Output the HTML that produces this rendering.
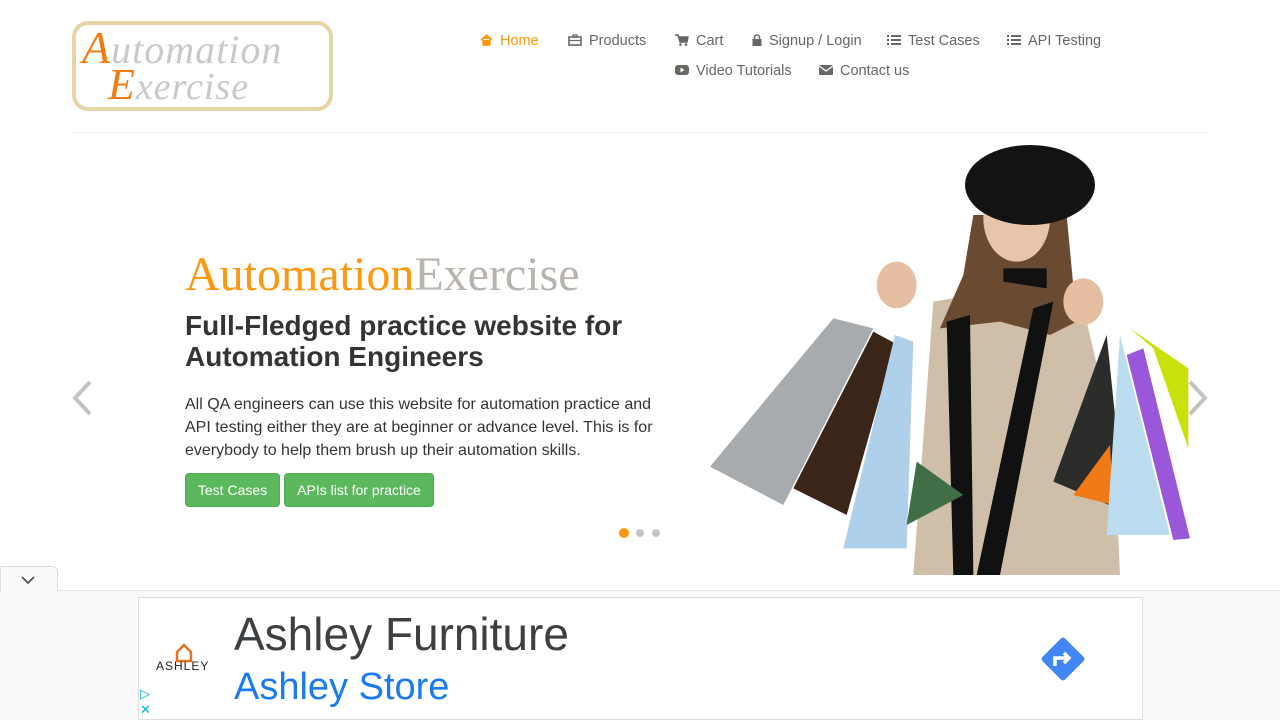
<!DOCTYPE html>
<html><head><meta charset="utf-8"><style>
*{margin:0;padding:0;box-sizing:border-box}
body{width:1280px;height:720px;overflow:hidden;background:#fff;font-family:"Liberation Sans",Arial,sans-serif;position:relative}
.abs{position:absolute}
.nav a{position:absolute;font-size:14.5px;color:#696763;white-space:nowrap}
.nav a svg{display:inline-block;margin-right:7px;vertical-align:-1px}
.btn{position:absolute;top:473px;height:34px;background:#5cb85c;border:1px solid #4cae4c;border-radius:4px;color:#fff;font-size:14px;line-height:32px;text-align:center}
.dot{position:absolute;top:529px;width:8px;height:8px;border-radius:50%;background:#c4c4c4}
</style></head><body>
<div class="abs" style="left:72px;top:21px;width:261px;height:90px;border:4px solid #e6d4a6;border-radius:16px;background:#fff"></div>
<div class="abs" style="left:82px;top:26px;font-family:'Liberation Serif',serif;font-style:italic;font-size:40px;color:#c9c9c9;letter-spacing:1px;line-height:44px"><span style="color:#f57b12;font-size:46px">A</span>utomation</div>
<div class="abs" style="left:108px;top:64px;font-family:'Liberation Serif',serif;font-style:italic;font-size:38px;color:#c9c9c9;letter-spacing:1px;line-height:42px"><span style="color:#f57b12;font-size:44px">E</span>xercise</div>
<div class="nav">
<a style="left:480px;top:33px;color:#fe980f"><svg width="13" height="12"><path d="M1 6 L6.5 1 L12 6 M3 5 V11 H10 V5" fill="#fe980f" stroke="#fe980f" stroke-width="1.4"/></svg>Home</a>
<a style="left:568px;top:33px"><svg width="14" height="12"><rect x="1" y="3" width="12" height="8" fill="none" stroke="#696763" stroke-width="1.6"/><rect x="5" y="1" width="4" height="2" fill="none" stroke="#696763" stroke-width="1.3"/><line x1="1" y1="6.5" x2="13" y2="6.5" stroke="#696763" stroke-width="1.2"/></svg>Products</a>
<a style="left:675px;top:33px"><svg width="14" height="12"><path d="M0 1 H3 L5 8 H12 L13 3 H4" fill="#696763" stroke="#696763" stroke-width="1.4"/><circle cx="5.5" cy="10.5" r="1.3" fill="#696763"/><circle cx="11" cy="10.5" r="1.3" fill="#696763"/></svg>Cart</a>
<a style="left:752px;top:33px"><svg width="10" height="12"><rect x="0.5" y="5" width="9" height="7" fill="#696763"/><path d="M2.5 5 V3.5 A2.5 2.5 0 0 1 7.5 3.5 V5" fill="none" stroke="#696763" stroke-width="1.5"/></svg>Signup / Login</a>
<a style="left:887px;top:33px"><svg width="14" height="12"><path d="M0 2H2M4 2H14M0 6H2M4 6H14M0 10H2M4 10H14" stroke="#696763" stroke-width="2"/></svg>Test Cases</a>
<a style="left:1007px;top:33px"><svg width="14" height="12"><path d="M0 2H2M4 2H14M0 6H2M4 6H14M0 10H2M4 10H14" stroke="#696763" stroke-width="2"/></svg>API Testing</a>
<a style="left:675px;top:63px"><svg width="14" height="12"><rect x="0" y="1" width="14" height="10" rx="3" fill="#696763"/><path d="M5.5 3.5 L9.5 6 L5.5 8.5Z" fill="#fff"/></svg>Video Tutorials</a>
<a style="left:819px;top:63px"><svg width="14" height="12"><rect x="0" y="1" width="14" height="10" rx="1" fill="#696763"/><path d="M0 2 L7 7 L14 2" stroke="#fff" stroke-width="1.2" fill="none"/></svg>Contact us</a>
</div>
<div class="abs" style="left:72px;top:132px;width:1137px;height:1px;background:#f0f0f0"></div>
<div class="abs" style="left:185px;top:247px;font-family:'Liberation Serif',serif;font-size:48px;line-height:56px"><span style="color:#fe980f">Automation</span><span style="color:#b8b3ad">Exercise</span></div>
<div class="abs" style="left:185px;top:310px;font-size:28px;font-weight:bold;color:#363432;line-height:31px">Full-Fledged practice website for<br>Automation Engineers</div>
<div class="abs" style="left:185px;top:393px;width:480px;font-size:16px;color:#363432;line-height:23px">All QA engineers can use this website for automation practice and API testing either they are at beginner or advance level. This is for everybody to help them brush up their automation skills.</div>
<div class="btn" style="left:185px;width:95px">Test Cases</div>
<div class="btn" style="left:284px;width:150px">APIs list for practice</div>
<div class="dot" style="left:619px;background:#fe980f;width:10px;height:10px;top:528px"></div>
<div class="dot" style="left:636px"></div>
<div class="dot" style="left:652px"></div>
<svg class="abs" style="left:70px;top:380px" width="24" height="36"><path d="M20 2 L5 18 L20 34" stroke="#c2c2c1" stroke-width="4" fill="none"/></svg>
<svg class="abs" style="left:1186px;top:380px" width="24" height="36"><path d="M4 2 L19 18 L4 34" stroke="#c2c2c1" stroke-width="4" fill="none"/></svg>
<svg class="abs" style="left:700px;top:135px" width="500" height="440" viewBox="0 0 1500 1320">
<polygon points="640,1320 700,500 880,470 1060,480 1160,560 1240,900 1260,1320" fill="#cfbea8"/>
<polygon points="820,240 1100,240 1130,560 1050,600 900,560 720,580 790,420" fill="#6b4a32"/>
<ellipse cx="950" cy="250" rx="100" ry="130" fill="#e8c4aa"/>
<polygon points="910,400 1040,400 1040,460 910,440" fill="#111"/>
<ellipse cx="990" cy="150" rx="195" ry="120" fill="#131313"/>
<polygon points="740,560 810,540 820,1320 760,1320" fill="#111"/>
<polygon points="1000,520 1060,500 900,1320 830,1320" fill="#111"/>
<polygon points="30,995 400,550 520,580 250,1110" fill="#a8abae"/>
<polygon points="280,1060 520,590 585,625 440,1140" fill="#3b2518"/>
<polygon points="430,1240 585,600 640,620 620,1240" fill="#afd0ea"/>
<polygon points="620,1170 650,980 790,1080" fill="#3f6e47"/>
<ellipse cx="590" cy="450" rx="60" ry="70" fill="#e6bfa2"/>
<ellipse cx="1150" cy="500" rx="60" ry="70" fill="#e6bfa2"/>
<polygon points="1060,1040 1220,600 1275,1130" fill="#2c2c2a"/>
<polygon points="1120,1080 1230,930 1240,1110" fill="#f07a18"/>
<polygon points="1220,1200 1260,600 1410,1200" fill="#bcdcf0"/>
<polygon points="1280,660 1330,640 1470,1210 1420,1215" fill="#9b57d9"/>
<polygon points="1290,580 1360,640 1465,940 1465,700" fill="#c9e10a"/>
</svg>
<div class="abs" style="left:0;top:590px;width:1280px;height:130px;background:#fafafa;border-top:1px solid #e6e6e6"></div>
<div class="abs" style="left:0;top:566px;width:58px;height:26px;background:#fafafa;border:1px solid #ddd;border-bottom:none;border-radius:0 6px 0 0"></div>
<svg class="abs" style="left:20px;top:575px" width="16" height="10"><path d="M2 2 L8 8 L14 2" stroke="#555" stroke-width="1.8" fill="none"/></svg>
<div class="abs" style="left:138px;top:597px;width:1005px;height:123px;background:#fff;border:1px solid #ddd"></div>
<svg class="abs" style="left:174px;top:643px" width="20" height="20"><path d="M3 18 V9 L10 2 L17 9 V18 Z" stroke="#e8731f" stroke-width="2.5" fill="none"/></svg>
<div class="abs" style="left:156px;top:659px;font-size:12px;color:#222;letter-spacing:1px">ASHLEY</div>
<div class="abs" style="left:234px;top:606px;font-size:46px;color:#3c4043;line-height:56px">Ashley Furniture</div>
<div class="abs" style="left:234px;top:662px;font-size:38px;color:#1a7bf0;line-height:50px">Ashley Store</div>
<svg class="abs" style="left:1038px;top:634px" width="50" height="50"><rect x="9" y="9" width="32" height="32" transform="rotate(45 25 25)" fill="#4285f4" rx="3"/><path d="M17 32 V24 H30 M26 19 L31 24 L26 29" stroke="#fff" stroke-width="3.5" fill="none"/></svg>
<div class="abs" style="left:140px;top:686px;color:#00aecd;font-size:13px;line-height:16px">&#9655;<br>&#10005;</div>
</body></html>
